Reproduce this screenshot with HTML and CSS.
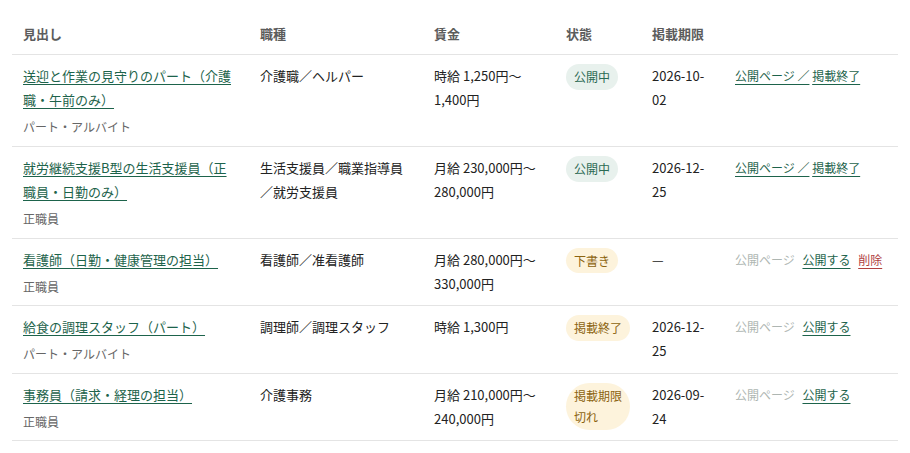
FILE: index.html
```html
<!DOCTYPE html>
<html lang="ja">
<head>
  <meta charset="UTF-8" />
  <meta name="viewport" content="width=device-width, initial-scale=1.0"/>
  <title>求人一覧</title>
  <link rel="stylesheet" href="styles.css">
</head>
<body>

<main class="wrap">
  <table class="job-table">
    <colgroup>
      <col class="c-title">
      <col class="c-kind">
      <col class="c-pay">
      <col class="c-state">
      <col class="c-date">
      <col class="c-act">
    </colgroup>
    <thead>
      <tr>
        <th>見出し</th>
        <th>職種</th>
        <th>賃金</th>
        <th>状態</th>
        <th>掲載期限</th>
        <th></th>
      </tr>
    </thead>
    <tbody>
      <tr>
        <td>
          <a class="link" href="#">送迎と作業の見守りのパート（介護職・午前のみ）</a>
          <div class="sub">パート・アルバイト</div>
        </td>
        <td>介護職／ヘルパー</td>
        <td>時給 1,250円〜1,400円</td>
        <td><span class="badge open">公開中</span></td>
        <td>2026-10-02</td>
        <td class="actions">
          <a class="link" href="#">公開ページ ／</a> <a class="link" href="#">掲載終了</a>
        </td>
      </tr>
      <tr>
        <td>
          <a class="link" href="#">就労継続支援B型の生活支援員（正職員・日勤のみ）</a>
          <div class="sub">正職員</div>
        </td>
        <td>生活支援員／職業指導員／就労支援員</td>
        <td>月給 230,000円〜280,000円</td>
        <td><span class="badge open">公開中</span></td>
        <td>2026-12-25</td>
        <td class="actions">
          <a class="link" href="#">公開ページ ／</a> <a class="link" href="#">掲載終了</a>
        </td>
      </tr>
      <tr>
        <td>
          <a class="link" href="#">看護師（日勤・健康管理の担当）</a>
          <div class="sub">正職員</div>
        </td>
        <td>看護師／准看護師</td>
        <td>月給 280,000円〜330,000円</td>
        <td><span class="badge warn">下書き</span></td>
        <td>—</td>
        <td class="actions">
          <span class="off">公開ページ</span> <a class="link" href="#">公開する</a> <a class="link danger" href="#">削除</a>
        </td>
      </tr>
      <tr>
        <td>
          <a class="link" href="#">給食の調理スタッフ（パート）</a>
          <div class="sub">パート・アルバイト</div>
        </td>
        <td>調理師／調理スタッフ</td>
        <td>時給 1,300円</td>
        <td><span class="badge warn">掲載終了</span></td>
        <td>2026-12-25</td>
        <td class="actions">
          <span class="off">公開ページ</span> <a class="link" href="#">公開する</a>
        </td>
      </tr>
      <tr>
        <td>
          <a class="link" href="#">事務員（請求・経理の担当）</a>
          <div class="sub">正職員</div>
        </td>
        <td>介護事務</td>
        <td>月給 210,000円〜240,000円</td>
        <td><span class="badge warn">掲載期限切れ</span></td>
        <td>2026-09-24</td>
        <td class="actions">
          <span class="off">公開ページ</span> <a class="link" href="#">公開する</a>
        </td>
      </tr>
    </tbody>
  </table>
</main>

</body>
</html>
```

FILE: styles.css
```css
body {
  font-family: "Noto Sans CJK JP", "Noto Sans", sans-serif;
  margin: 0;
  background-color: #ffffff;
  color: #222222;
  font-size: 13px;
  line-height: 1.8;
}
.wrap {
  padding: 12px;
}
.job-table {
  width: 100%;
  border-collapse: collapse;
  table-layout: fixed;
}
.c-title { width: 237px; }
.c-kind { width: 174px; }
.c-pay { width: 132px; }
.c-state { width: 86px; }
.c-date { width: 83px; }
.c-act { width: 174px; }
.job-table th {
  text-align: left;
  font-weight: 700;
  color: #5c5c5c;
  padding: 10px 11px 9px;
  border-bottom: 1px solid #e4e4e4;
}
.job-table td {
  vertical-align: top;
  line-height: 24px;
  padding: 9px 11px 8px;
  border-bottom: 1px solid #e4e4e4;
}
.link {
  color: #1d634b;
  text-decoration: underline;
  text-underline-offset: 3px;
}
.sub {
  margin-top: 4px;
  font-size: 12px;
  line-height: 1.8;
  color: #666666;
}
.badge {
  display: inline-block;
  vertical-align: top;
  font-size: 12px;
  line-height: 1.8;
  padding: 2px 8px;
  border-radius: 999px;
}
.badge.open {
  background-color: #e8f1ed;
  color: #2b6a53;
}
.badge.warn {
  background-color: #fdf3dc;
  color: #8c6410;
}
.actions {
  font-size: 12px;
}
.off {
  color: #aeb6b2;
  margin-right: 5px;
}
.danger {
  color: #b0403f;
  margin-left: 5px;
}
```
